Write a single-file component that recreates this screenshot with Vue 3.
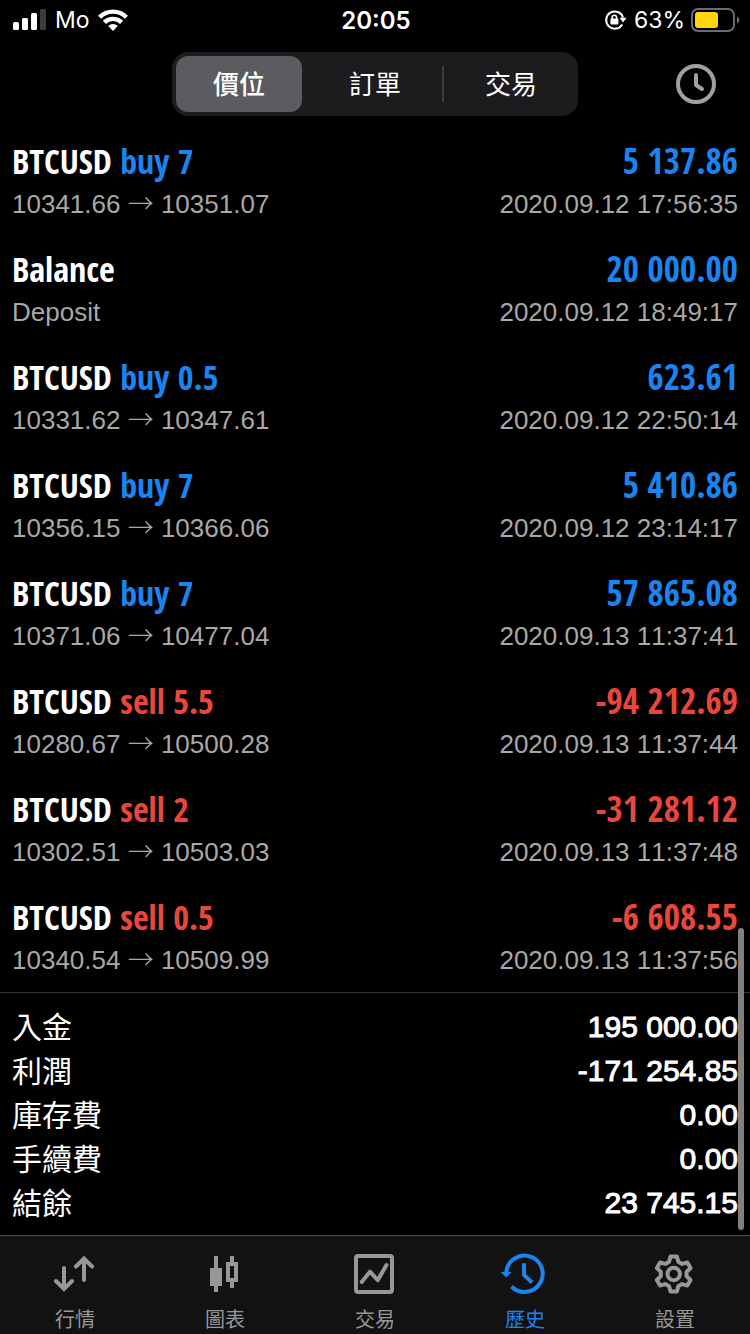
<script setup>
import { ref } from 'vue'

const segments = ['價位', '訂單', '交易']
const activeSegment = ref(0)

const deals = [
  { symbol: 'BTCUSD', action: 'buy 7', side: 'up', amount: '5 137.86', open: '10341.66', close: '10351.07', time: '2020.09.12 17:56:35' },
  { symbol: 'Balance', action: '', side: 'up', amount: '20 000.00', open: 'Deposit', close: '', time: '2020.09.12 18:49:17' },
  { symbol: 'BTCUSD', action: 'buy 0.5', side: 'up', amount: '623.61', open: '10331.62', close: '10347.61', time: '2020.09.12 22:50:14' },
  { symbol: 'BTCUSD', action: 'buy 7', side: 'up', amount: '5 410.86', open: '10356.15', close: '10366.06', time: '2020.09.12 23:14:17' },
  { symbol: 'BTCUSD', action: 'buy 7', side: 'up', amount: '57 865.08', open: '10371.06', close: '10477.04', time: '2020.09.13 11:37:41' },
  { symbol: 'BTCUSD', action: 'sell 5.5', side: 'down', amount: '-94 212.69', open: '10280.67', close: '10500.28', time: '2020.09.13 11:37:44' },
  { symbol: 'BTCUSD', action: 'sell 2', side: 'down', amount: '-31 281.12', open: '10302.51', close: '10503.03', time: '2020.09.13 11:37:48' },
  { symbol: 'BTCUSD', action: 'sell 0.5', side: 'down', amount: '-6 608.55', open: '10340.54', close: '10509.99', time: '2020.09.13 11:37:56' }
]

const totals = [
  { label: '入金', value: '195 000.00' },
  { label: '利潤', value: '-171 254.85' },
  { label: '庫存費', value: '0.00' },
  { label: '手續費', value: '0.00' },
  { label: '結餘', value: '23 745.15' }
]

const tabs = [
  { id: 'quotes', label: '行情' },
  { id: 'chart', label: '圖表' },
  { id: 'trade', label: '交易' },
  { id: 'history', label: '歷史' },
  { id: 'settings', label: '設置' }
]
const activeTab = ref('history')
</script>

<template>
  <div class="screen">
    <div class="status">
      <div class="status-left">
        <svg width="34" height="22" viewBox="0 0 34 22" aria-hidden="true">
          <rect x="0" y="13" width="6" height="8" rx="1.5" fill="#fff" />
          <rect x="9" y="9" width="6" height="12" rx="1.5" fill="#fff" />
          <rect x="18" y="4" width="6" height="17" rx="1.5" fill="#fff" />
          <rect x="27" y="0" width="6" height="21" rx="1.5" fill="#3c3c3e" />
        </svg>
        <span class="small">Mo</span>
        <svg width="30" height="22" viewBox="0 0 30 22" aria-hidden="true">
          <g fill="none" stroke="#fff" stroke-width="4.4">
            <path d="M1.6 8.2a19 19 0 0 1 26.8 0" />
            <path d="M6.4 13.4a12.2 12.2 0 0 1 17.2 0" />
          </g>
          <path d="M15 22l-4.8-4.9a6.8 6.8 0 0 1 9.6 0z" fill="#fff" />
        </svg>
      </div>
      <span class="clock">20:05</span>
      <div class="status-right">
        <svg width="24" height="22" viewBox="0 0 24 22" aria-hidden="true">
          <path d="M19 8.5A8.6 8.6 0 1 0 18.2 15.4" fill="none" stroke="#fff" stroke-width="2" />
          <path d="M15.5 8.8h7l-3.4 4.6z" fill="#fff" />
          <rect x="6.4" y="9.6" width="8" height="6" rx="1" fill="#fff" />
          <path d="M8.2 10V8.4a2.2 2.2 0 0 1 4.4 0V10" fill="none" stroke="#fff" stroke-width="1.6" />
        </svg>
        <span class="small">63%</span>
        <svg width="48" height="24" viewBox="0 0 48 24" aria-hidden="true">
          <rect x="1" y="1" width="42" height="22" rx="6" fill="none" stroke="#6c6c6e" stroke-width="2" />
          <rect x="4" y="4" width="23" height="16" rx="3" fill="#ffd60a" />
          <path d="M46 8.5q2.4 1 2.4 3.5T46 15.5z" fill="#6c6c6e" />
        </svg>
      </div>
    </div>

    <header class="header">
      <div class="segments" role="group">
        <button
          v-for="(name, i) in segments"
          :key="name"
          type="button"
          class="segment"
          :class="{ selected: i === activeSegment, divided: i > 0 && i - 1 !== activeSegment && i !== activeSegment }"
          @click="activeSegment = i"
        >{{ name }}</button>
      </div>
      <button type="button" class="period" aria-label="時間">
        <svg width="40" height="40" viewBox="0 0 40 40" fill="none" stroke="#a0a0a0" stroke-width="4">
          <circle cx="20" cy="20" r="18" />
          <path d="M20 11v10l6 4" stroke-linecap="round" stroke-linejoin="round" />
        </svg>
      </button>
    </header>

    <main class="content">
      <ul class="deals">
        <li v-for="deal in deals" :key="deal.time" class="deal">
          <div class="line title">
            <span class="name">{{ deal.symbol }} <span :class="deal.side">{{ deal.action }}</span></span>
            <span class="amount" :class="deal.side">{{ deal.amount }}</span>
          </div>
          <div class="line detail">
            <span v-if="deal.close">{{ deal.open }} <span class="arrow">→</span> {{ deal.close }}</span>
            <span v-else>{{ deal.open }}</span>
            <time>{{ deal.time }}</time>
          </div>
        </li>
      </ul>
      <dl class="totals">
        <div v-for="total in totals" :key="total.label" class="line total">
          <dt>{{ total.label }}</dt>
          <dd>{{ total.value }}</dd>
        </div>
      </dl>
      <div class="scroll-thumb"></div>
    </main>

    <nav class="tabs">
      <button
        v-for="tab in tabs"
        :key="tab.id"
        type="button"
        class="tab"
        :class="{ current: tab.id === activeTab }"
        @click="activeTab = tab.id"
      >
        <svg width="44" height="44" viewBox="0 0 44 44" fill="none" stroke="currentColor" stroke-width="4" aria-hidden="true">
          <g v-if="tab.id === 'quotes'" stroke-linecap="round">
            <path d="M11 16v20M3 29l8 8 8-8" />
            <path d="M31 28V7M23 14.500l8-8 8 8" />
          </g>
          <g v-else-if="tab.id === 'chart'">
            <path d="M13 4v36" />
            <rect x="7" y="16" width="12" height="18" fill="currentColor" stroke="none" />
            <path d="M29 4v6M29 30v6" />
            <rect x="25" y="12" width="8" height="16" />
          </g>
          <g v-else-if="tab.id === 'trade'">
            <rect x="3" y="4" width="36" height="36" rx="2" />
            <path d="M8.700 30L17 19.700l7.700 8.500L33.500 13" stroke-linecap="round" stroke-linejoin="round" />
          </g>
          <g v-else-if="tab.id === 'history'">
            <path d="M3.300 21A18.200 18.200 0 1 1 8.500 34.500" />
            <path d="M-2.300 20H8.700L3.300 25.500z" fill="currentColor" stroke="none" />
            <path d="M21 11.300V23l8 7.500" />
          </g>
          <g v-else transform="translate(20.7 22)" stroke-linejoin="round">
            <circle r="6.2" />
            <path d="M-4.6-12.2L-3.2-17.5H3.2L4.6-12.2L8.3-10.1L13.6-11.5L16.8-6L12.9-2.1V2.1L16.8 6L13.6 11.5L8.3 10.1L4.6 12.2L3.2 17.5H-3.2L-4.6 12.2L-8.3 10.1L-13.6 11.5L-16.8 6L-12.9 2.1V-2.1L-16.8-6L-13.6-11.5L-8.3-10.1z" />
          </g>
        </svg>
        <span>{{ tab.label }}</span>
      </button>
    </nav>
  </div>
</template>

<style>
body {
  background: #000;
}
</style>

<style scoped>
.screen {
  display: flex;
  flex-direction: column;
  min-height: 100vh;
  background: #000;
  color: #fff;
  font-family: "Liberation Sans", "Noto Sans CJK TC", sans-serif;
  font-kerning: none;
}

button {
  margin: 0;
  padding: 0;
  border: 0;
  background: none;
  color: inherit;
  font-family: inherit;
}

svg {
  display: block;
  flex: none;
  overflow: visible;
}

.status {
  display: grid;
  grid-template-columns: 1fr auto 1fr;
  align-items: center;
  height: 40px;
  padding: 0 11px 0 13px;
  font-family: Inter, sans-serif;
  font-size: 24px;
}

.status-left,
.status-right {
  display: flex;
  align-items: center;
  gap: 8px;
}

.status-right {
  justify-content: flex-end;
  gap: 6px;
}

.small {
  font-size: 23px;
  font-weight: 400;
}

.clock {
  font-weight: 600;
}

.header {
  display: grid;
  grid-template-columns: 1fr auto 1fr;
  align-items: center;
  height: 88px;
  padding: 0 34px;
  box-sizing: border-box;
}

.segments {
  grid-column: 2;
  display: grid;
  grid-template-columns: repeat(3, 126px);
  gap: 10px;
  padding: 4px;
  border-radius: 16px;
  background: #1c1c1e;
}

.segment {
  position: relative;
  height: 56px;
  padding-bottom: 4px;
  border-radius: 12px;
  font-size: 26px;
}

.segment.selected {
  background: #5b5b60;
  font-weight: 500;
}

.segment.divided::before {
  content: "";
  position: absolute;
  left: -6px;
  top: 10px;
  bottom: 10px;
  width: 2px;
  background: #3c3c40;
}

.period {
  justify-self: end;
}

.content {
  position: relative;
  flex: 1;
}

.deals,
.totals,
.totals dd {
  margin: 0;
  padding: 0;
  list-style: none;
}

.line {
  display: flex;
  justify-content: space-between;
  padding: 0 12px;
  white-space: nowrap;
}

.deal {
  padding: 12px 0 10px;
}

.title {
  font-family: "Open Sans Condensed", "Liberation Sans Narrow", sans-serif;
  font-weight: 700;
  line-height: 42px;
}

.name {
  font-size: 34px;
}

.amount {
  font-size: 35px;
}

.up {
  color: #1a84f0;
}

.down {
  color: #e8483c;
}

.detail {
  font-size: 26px;
  line-height: 44px;
  color: #a8a8a8;
}

.arrow {
  font-family: "Noto Sans CJK TC", sans-serif;
  font-weight: 300;
  line-height: 1;
}

.totals {
  padding: 12px 0 10px;
  border-top: 1px solid #333;
}

.total {
  height: 44px;
  font-size: 30px;
  line-height: 44px;
}

.total dt {
  font-family: "Noto Sans CJK TC", sans-serif;
  line-height: 40px;
}

.total dd {
  -webkit-text-stroke: 1px #fff;
}

.scroll-thumb {
  position: absolute;
  right: 6px;
  bottom: 5px;
  width: 6px;
  height: 302px;
  border-radius: 3px;
  background: #808080;
}

.tabs {
  display: grid;
  grid-template-columns: repeat(5, 1fr);
  border-top: 1px solid #4a4a4a;
  background: #121212;
}

.tab {
  display: flex;
  flex-direction: column;
  align-items: center;
  gap: 12px;
  padding: 16px 0 2px;
  color: #989898;
  font-size: 20px;
  line-height: 24px;
}

.tab.current {
  color: #1a84f0;
}
</style>
